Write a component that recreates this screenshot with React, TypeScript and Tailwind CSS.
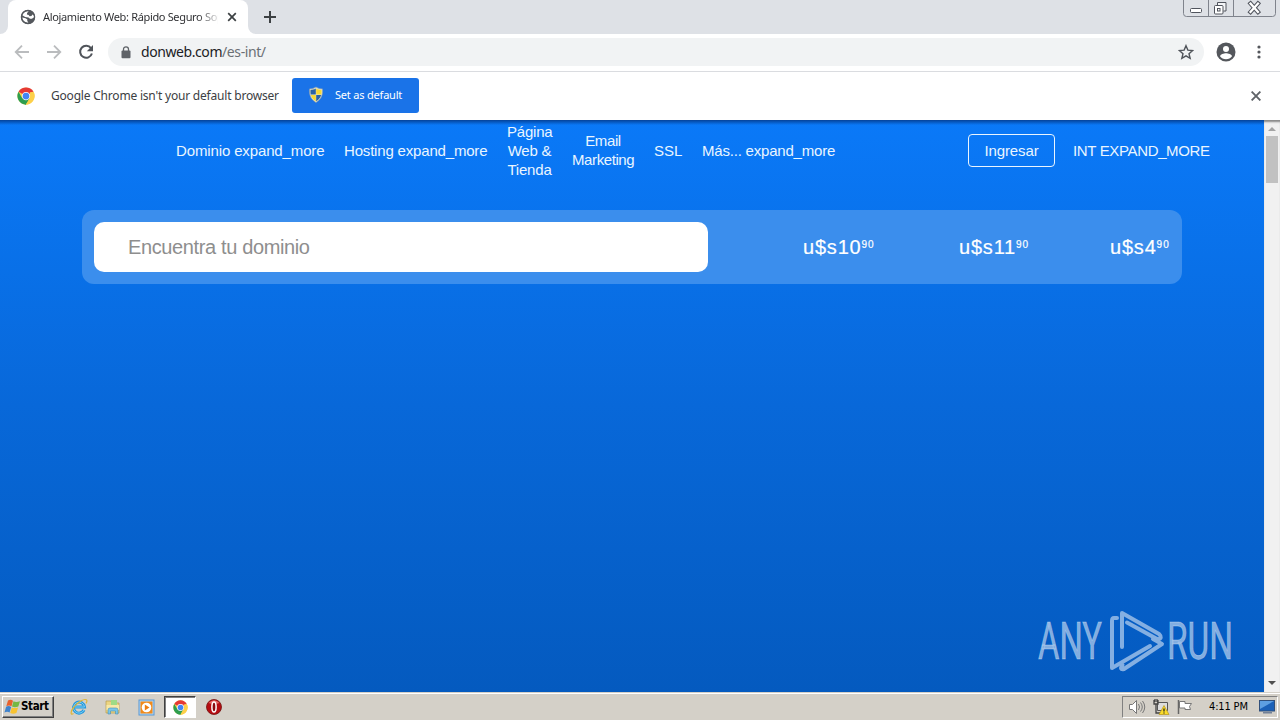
import React from "react";

const UI = "font-['Noto_Sans','Open_Sans',sans-serif]";
const WEB = "font-['Liberation_Sans',sans-serif]";

function ChromeLogo({ size }: { size: number }) {
  return (
    <svg width={size} height={size} viewBox="0 0 48 48" className="shrink-0">
      <circle cx="24" cy="24" r="23" fill="#fdd04a" />
      <path d="M24 24 L4.1 12.5 A23 23 0 0 1 43.9 12.5 Z" fill="#e53935" />
      <path d="M4.1 12.5 L14 29.7 L24 35 L24 47 A23 23 0 0 1 4.1 12.5 Z" fill="#2e9e4f" />
      <path d="M23 47 L34 29.7 L24 33 L14 29.7 Z" fill="#2e9e4f" />
      <path d="M24 47 L34 29.7 L34.5 14 L43.9 12.5 A23 23 0 0 1 24 47 Z" fill="#fdd04a" />
      <circle cx="24" cy="24" r="11" fill="#fff" />
      <circle cx="24" cy="24" r="9" fill="#4285f4" />
    </svg>
  );
}

function Globe() {
  return (
    <svg width="16" height="16" viewBox="0 0 16 16" className="shrink-0">
      <circle cx="8" cy="8" r="7" fill="#54585d" />
      <path d="M8.7 2.3 7.1 4l-.2 1.6 1.8.5.8 1.2 2-.2.8-1.6 1.6.9.2 1.8-2.2 1.5H10l-1.5-1.3-3.3-.5-2.9-1.7C2.8 4 5.1 2.2 8.700 2.300z" fill="#fff" />
      <path d="m2.200 8.600 3.300.6 1.900 1.400-.2 1.200 1.200 1.900C5 13.700 2.400 11.600 2.200 8.600z" fill="#fff" />
      <circle cx="8" cy="8" r="6.600" fill="none" stroke="#54585d" strokeWidth="1.300" />
    </svg>
  );
}

function Shield() {
  return (
    <svg width="16" height="18" viewBox="0 0 16 18" className="mb-px shrink-0">
      <path d="M8 1c2 1.300 4 1.900 6.500 1.900.5 6-1.300 10.500-6.500 13.600C2.800 13.400 1 8.900 1.500 2.900 4 2.900 6 2.300 8 1z" fill="#e8e6c8" stroke="#7f98b5" strokeWidth=".7" />
      <path d="M7.800 2.500V8.600H2.700C2.400 7 2.400 5.600 2.500 4 4.500 3.900 6.200 3.500 7.800 2.500z" fill="#2b62a4" />
      <path d="M8.200 2.500V8.600h5.100c.3-1.600.3-3 .2-4.600-2-.1-3.700-.5-5.300-1.500z" fill="#f7d832" />
      <path d="M7.800 15.200V8.900H2.900c.8 2.700 2.300 4.600 4.900 6.300z" fill="#f7d832" />
      <path d="M8.200 15.200V8.900h4.900c-.8 2.700-2.300 4.600-4.900 6.300z" fill="#2b62a4" />
    </svg>
  );
}

function TabStrip() {
  return (
    <div className="flex h-[34px] shrink-0 items-start bg-[#dee1e6]">
      <div className="flex h-[34px] w-2 items-end bg-white">
        <div className="h-[34px] w-2 rounded-br-[8px] bg-[#dee1e6]" />
      </div>
      <div className="flex h-[34px] w-[240px] items-center rounded-t-[8px] bg-white pl-3">
        <Globe />
        <div className={`ml-[7px] w-[175px] whitespace-nowrap text-[11px] leading-4 tracking-[-0.34px] text-[#303134] [mask-image:linear-gradient(90deg,#000_155px,transparent_178px)] ${UI}`}>
          Alojamiento Web: Rápido Seguro Sop
        </div>
        <svg width="10" height="10" viewBox="0 0 10 10" className="ml-[9px] shrink-0">
          <path d="m1.200 1.200 7.600 7.600m0-7.600L1.200 8.800" stroke="#3c4043" strokeWidth="1.700" />
        </svg>
      </div>
      <div className="flex h-[34px] w-2 bg-white">
        <div className="h-[34px] w-2 rounded-bl-[8px] bg-[#dee1e6]" />
      </div>
      <svg width="14" height="14" viewBox="0 0 14 14" className="ml-[7px] mt-[10px]">
        <path d="M7 1v12M1 7h12" stroke="#3c4043" strokeWidth="2" />
      </svg>
      <svg width="94" height="18" viewBox="0 0 94 18" className="ml-auto mr-[3px]" fill="none">
        <path d="M.5 0v13.500q0 3 3 3h86q3 0 3-3V0M25.500 0v16M50.500 0v16" stroke="#7f838c" />
        <rect x="7.500" y="8.500" width="11" height="4" rx="1" fill="#fff" stroke="#50545d" />
        <path d="M34.500 5V2.500h8.500v8.500h-2.500" stroke="#50545d" fill="#f4f5f7" />
        <rect x="31.500" y="5.500" width="8.500" height="8.500" rx="1" stroke="#50545d" fill="#fff" />
        <rect x="34.500" y="8.500" width="2.500" height="2.500" stroke="#50545d" />
        <path d="m67.500 3.500 7.500 8.500m0-8.500-7.500 8.500" stroke="#50545d" strokeWidth="4.300" strokeLinecap="square" />
        <path d="m67.500 3.500 7.500 8.500m0-8.500-7.500 8.500" stroke="#fff" strokeWidth="2.300" strokeLinecap="square" />
      </svg>
    </div>
  );
}

function Toolbar() {
  return (
    <div className="flex h-[38px] shrink-0 items-center border-b border-[#dadce0] bg-white pb-px">
      <svg width="16" height="16" viewBox="0 0 16 16" className="ml-[14px]" fill="none" stroke="#babcbe" strokeWidth="1.800">
        <path d="M15 8H2M8 1.700 1.700 8 8 14.300" />
      </svg>
      <svg width="16" height="16" viewBox="0 0 16 16" className="ml-4" fill="none" stroke="#babcbe" strokeWidth="1.800">
        <path d="M1 8h13M8 1.700 14.300 8 8 14.300" />
      </svg>
      <svg width="16" height="16" viewBox="0 0 16 16" className="ml-4" fill="none">
        <path d="M13 4.200A6 6 0 1 0 13.900 9.500" stroke="#50545a" strokeWidth="2" />
        <path d="M15 1v6.200H8.800z" fill="#50545a" />
      </svg>
      <div className="ml-[14px] flex h-7 w-[1096px] items-center rounded-full bg-[#f1f3f4]">
        <svg width="10" height="13" viewBox="0 0 10 13" className="ml-[13px]">
          <path d="M2.500 5V3.300a2.500 2.500 0 0 1 5 0V5" fill="none" stroke="#5f6368" strokeWidth="1.300" />
          <rect x=".5" y="4.600" width="9" height="7.700" rx="1" fill="#5f6368" />
        </svg>
        <div className={`ml-[10px] whitespace-nowrap text-[14px] leading-5 tracking-[-0.42px] text-[#6b6f74] ${UI}`}>
          <span className="text-[#202124]">donweb.com</span>/es-int/
        </div>
        <svg width="16" height="16" viewBox="0 0 24 24" className="ml-auto mr-[10px]">
          <path d="m12 2.500 2.800 6.700 7.200.6-5.500 4.700 1.700 7L12 17.700l-6.200 3.800 1.700-7L2 9.800l7.200-.6z" fill="none" stroke="#50545a" strokeWidth="2.100" />
        </svg>
      </div>
      <svg width="20" height="20" viewBox="0 0 20 20" className="ml-3">
        <circle cx="10" cy="10" r="9.500" fill="#54575c" />
        <circle cx="10" cy="7" r="3" fill="#fff" />
        <path d="M4 14.300c0-2 4-3.100 6-3.100s6 1.100 6 3.100c-1.300 1.900-3.500 3-6 3s-4.700-1.100-6-3z" fill="#fff" />
      </svg>
      <svg width="4" height="14" viewBox="0 0 4 14" className="ml-[21px]" fill="#54575c">
        <circle cx="2" cy="2" r="1.600" /><circle cx="2" cy="7" r="1.600" /><circle cx="2" cy="12" r="1.600" />
      </svg>
    </div>
  );
}

function InfoBar() {
  return (
    <div className="flex h-12 shrink-0 items-center bg-white pb-px pl-[17px]">
      <ChromeLogo size={18} />
      <div className={`ml-4 w-[241px] whitespace-nowrap text-[12px] leading-5 tracking-[-0.2px] text-[#3c4043] ${UI}`}>
        Google Chrome isn't your default browser
      </div>
      <div className="flex h-[35px] w-[127px] items-center rounded-[3px] bg-[#1a73e8] pl-4">
        <Shield />
        <span className={`ml-[11px] whitespace-nowrap text-[11px] tracking-[-0.2px] text-white ${UI}`}>Set as default</span>
      </div>
      <svg width="10" height="10" viewBox="0 0 10 10" className="ml-auto mr-[19px]">
        <path d="m.6.6 8.800 8.800m0-8.800L.6 9.400" stroke="#5f6368" strokeWidth="1.900" />
      </svg>
    </div>
  );
}

function Price({ amount, className }: { amount: string; className: string }) {
  return (
    <div className={`flex whitespace-nowrap text-white [-webkit-text-stroke:0.2px_white] ${className}`}>
      <span className="text-[20px] leading-6 tracking-[0.8px]">{amount}</span>
      <span className="mt-[4px] text-[10px] leading-3 tracking-[1px]">90</span>
    </div>
  );
}

function Watermark() {
  return (
    <svg width="200" height="70" viewBox="0 0 200 70" className="absolute bottom-[18px] right-[31px] overflow-visible">
      <g fill="#fff" fillOpacity=".5" stroke="#fff" strokeOpacity=".3" strokeWidth=".8" className="font-['Roboto',sans-serif]" fontSize="52">
        <text x="5" y="55" textLength="64" lengthAdjust="spacingAndGlyphs">ANY</text>
        <text x="134" y="55" textLength="66" lengthAdjust="spacingAndGlyphs">RUN</text>
      </g>
      <g fill="none" stroke="#84afe2" strokeWidth="4" strokeLinejoin="round" strokeLinecap="round">
        <path d="M84 14h-3q-2 0-2 3v47l38-22" />
        <path d="M89 43V9l37 21q4 4-1 5.500L94 18.500" />
        <path d="M120 35l9 5-38 25q-5 1-1.500-4" />
      </g>
    </svg>
  );
}

function Page() {
  return (
    <div className="flex min-h-0 flex-1">
      <main className={`relative w-[1264px] bg-[linear-gradient(#0a79f8_0%,#0868d9_50%,#045abf_100%)] ${WEB}`}>
        <div className="absolute inset-x-0 top-0 h-[5px] bg-[linear-gradient(rgba(0,30,90,0.6),transparent)]" />
        <nav className="flex h-[62px] items-center pb-0.5 pl-[176px] text-center text-[15px] leading-[19px] text-[#e9f5ff]">
          <div className="w-[148px] shrink-0 whitespace-nowrap text-left tracking-[-0.13px]">Dominio expand_more</div>
          <div className="ml-5 w-[143px] shrink-0 whitespace-nowrap text-left tracking-[-0.18px]">Hosting expand_more</div>
          <div className="ml-5 w-[45px] shrink-0 tracking-[-0.2px]">Página Web &amp; Tienda</div>
          <div className="ml-5 w-[62px] shrink-0 tracking-[-0.4px]">Email Marketing</div>
          <div className="ml-5 w-[28px] shrink-0">SSL</div>
          <div className="ml-5 w-[133px] shrink-0 whitespace-nowrap text-left tracking-[-0.2px]">Más... expand_more</div>
          <div className="ml-[133px] flex h-[33px] w-[87px] shrink-0 items-center justify-center rounded-[4px] border border-[#e9f5ff] tracking-[-0.1px]">Ingresar</div>
          <div className="ml-[18px] whitespace-nowrap tracking-[-0.35px]">INT EXPAND_MORE</div>
        </nav>
        <section className="ml-[82px] mt-[28px] flex h-[74px] w-[1100px] items-center rounded-[12px] bg-[#3b8eed] p-3">
          <div className="flex h-[50px] w-[614px] items-center rounded-[10px] bg-white pl-[34px] text-[20px] tracking-[-0.37px] text-[#8e8e8e]">
            Encuentra tu dominio
          </div>
          <Price amount="u$s10" className="ml-[95px] w-[156px]" />
          <Price amount="u$s11" className="w-[151px]" />
          <Price amount="u$s4" className="w-[60px]" />
        </section>
        <Watermark />
      </main>
      <div className="flex w-4 flex-col items-center bg-[#f1f1f1] shadow-[inset_0_3px_2px_-1px_#888]">
        <svg width="16" height="16" viewBox="0 0 16 16"><path d="M4 11h8L8 7z" fill="#a3a3a3" /></svg>
        <div className="h-[47px] w-3 bg-[#c1c1c1]" />
        <svg width="16" height="17" viewBox="0 0 16 17" className="mt-auto"><path d="M4 6h8l-4 4z" fill="#505050" /></svg>
      </div>
    </div>
  );
}

function Taskbar() {
  return (
    <div className="flex h-7 shrink-0 items-center border-t border-[#d4d0c8] bg-[#d4d0c8] pt-px shadow-[inset_0_1px_0_#fff]">
      <div className="ml-[2px] flex h-[22px] w-[52px] items-center border border-b-[#404040] border-l-white border-r-[#404040] border-t-white pl-px shadow-[inset_-1px_-1px_0_#808080]">
        <svg width="17" height="16" viewBox="0 0 17 16" className="shrink-0">
          <path d="M4 1.500q2.500-1.500 5 .2L7.500 7.200Q5 5.700 2.300 7.200z" fill="#e8612c" />
          <path d="M9.500 2.200q2.500 1.500 6.500 0L14.300 7.600q-3.500 1.300-6.300 0z" fill="#75b843" />
          <path d="M2.100 7.800q2.500-1.500 5.100.1l-1.600 5.700Q3.200 12 .5 13.600z" fill="#3f83cc" />
          <path d="M7.800 8.400q2.800 1.300 6.300 0l-1.700 5.600q-3.200 1.500-6.200 0z" fill="#f8c331" />
        </svg>
        <span className="whitespace-nowrap font-['DejaVu_Sans_Condensed','DejaVu_Sans',sans-serif] text-[11.5px] font-bold tracking-[-0.35px] text-black">Start</span>
      </div>
      <svg width="18" height="18" viewBox="0 0 18 18" className="ml-[16px]" fill="none">
        <path d="M14 12a5.500 5.500 0 1 1 .5-3H5" stroke="#2497dc" strokeWidth="3" />
        <path d="M14 12a5.500 5.500 0 1 1 .5-3H5" stroke="#7bd0f5" strokeWidth="1" />
        <path d="M3.500 15.500C0 18 .5 13 4 9c4-5 10-8.500 12.300-7.200 1 .6.700 2-.3 3.500" stroke="#dfb637" strokeWidth="1.200" />
      </svg>
      <svg width="18" height="18" viewBox="0 0 18 18" className="ml-[16px]">
        <path d="M2 3h5l1 2h7v10H2z" fill="#ecd583" stroke="#b79d4d" strokeWidth=".7" />
        <path d="M7 2h6v5H7z" fill="#9edb86" />
        <path d="M2.500 7h12.500v5H2.500z" fill="#f7e8a8" />
        <path d="M4 16v-4q0-2 2-2h6q2 0 2 2v4h-2.500v-3h-5v3z" fill="#7ac6e8" stroke="#478fb6" strokeWidth=".6" />
      </svg>
      <svg width="17" height="17" viewBox="0 0 17 17" className="ml-[16px]">
        <rect x="1" y="1" width="15" height="15" fill="#b2d7f5" stroke="#5898d4" />
        <rect x="2.500" y="2.500" width="12" height="12" fill="#f18a1b" />
        <circle cx="8.500" cy="8.500" r="4.800" fill="#fff" />
        <path d="M6.800 5.500v6l4.700-3z" fill="#ed7d11" />
      </svg>
      <div className="ml-[9px] flex h-[22px] w-[32px] items-center justify-center border border-b-white border-l-[#404040] border-r-white border-t-[#404040] bg-white shadow-[inset_1px_1px_0_#808080]">
        <ChromeLogo size={15} />
      </div>
      <svg width="18" height="18" viewBox="0 0 18 18" className="ml-[9px]">
        <circle cx="9" cy="9" r="7.500" fill="#b60c12" stroke="#72100f" strokeWidth=".8" />
        <path d="M3.500 5Q9-.5 14.500 5 9 7 3.500 5z" fill="#e66a68" />
        <ellipse cx="9" cy="9" rx="2.100" ry="5" fill="#8a0a0f" stroke="#fff" strokeWidth="1.500" />
      </svg>
      <div className="ml-auto mr-[2px] flex h-[22px] w-[156px] items-center border border-b-white border-l-[#808080] border-r-white border-t-[#808080]">
        <svg width="18" height="16" viewBox="0 0 18 16" className="ml-[5px] shrink-0" stroke="#777" fill="none">
          <path d="M1.500 5.500h3l4-4v13l-4-4h-3z" fill="#fff" />
          <path d="M10.500 5q2 3 0 6M12.500 3.500q3.500 4.500 0 9M14.500 2q4.500 6 0 12" />
        </svg>
        <svg width="18" height="18" viewBox="0 0 18 18" className="ml-[6px] shrink-0">
          <path d="M5.500 4.500h10v8h-10z" fill="#ddd" stroke="#555" />
          <path d="M2 2v4h4V2M4 6v9h5M3 1v3M5 1v3" fill="none" stroke="#444" strokeWidth="1.300" />
          <path d="M12 7.500 17 16.500H7z" fill="#fbdc28" stroke="#b6951a" strokeWidth=".7" />
          <path d="M12 10.500v3M12 14.500v1" stroke="#222" strokeWidth="1.300" />
        </svg>
        <svg width="17" height="16" viewBox="0 0 17 16" className="ml-[6px] shrink-0">
          <path d="M2.500 1v14" stroke="#666" strokeWidth="1.500" />
          <path d="M3.500 2.500h5.500v2h6.500l-2 3 1 3H9v-1.500H3.500z" fill="#fff" stroke="#777" />
        </svg>
        <span className="ml-[16px] w-[41px] shrink-0 whitespace-nowrap font-['DejaVu_Sans_Condensed','DejaVu_Sans',sans-serif] text-[11px] tracking-[-0.15px] text-black">4:11 PM</span>
        <svg width="16" height="14" viewBox="0 0 16 14" className="ml-[9px] shrink-0">
          <rect x=".5" y=".5" width="15" height="10.500" fill="#1b61b8" stroke="#31507b" />
          <path d="M1 1h14L1 9z" fill="#5d9fe2" />
          <path d="M4 12h9v1.500H4z" fill="#738197" />
        </svg>
      </div>
    </div>
  );
}

export default function App() {
  return (
    <div className="flex h-[720px] w-[1280px] flex-col overflow-hidden">
      <TabStrip />
      <Toolbar />
      <InfoBar />
      <Page />
      <Taskbar />
    </div>
  );
}
